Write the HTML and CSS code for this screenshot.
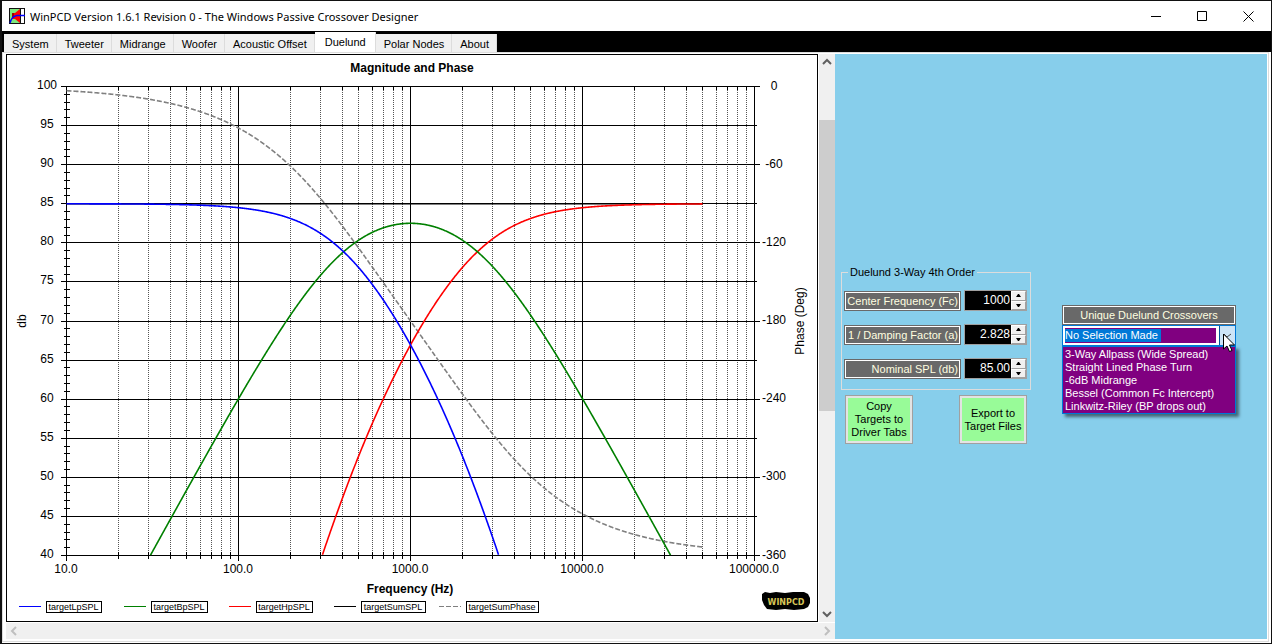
FILE: index.html
```
<!DOCTYPE html>
<html lang="en">
<head>
  <meta charset="UTF-8" />
  <title>WinPCD Version 1.6.1</title>
  <link rel="stylesheet" href="styles.css">
</head>
<body>

<div class="window">
  <header class="title-bar">
    <svg class="app-icon" width="16" height="16" viewBox="0 0 16 16">
      <rect width="16" height="16" fill="#111" />
      <rect x="1" y="1" width="10" height="14" fill="#7de87d" />
      <rect x="12" y="1" width="3" height="14" fill="#fff" />
      <path d="M3 5h3l5-4v14l-5-4H3z" fill="#f00" />
      <path d="M3 5h2v5H3z" fill="#900" />
      <path d="M1 15C2 11 4 8 8 7.500H16" fill="none" stroke="#00f" stroke-width="1.300" />
    </svg>
    <h1>WinPCD Version 1.6.1 Revision 0 - The Windows Passive Crossover Designer</h1>
    <div class="window-buttons">
      <button type="button" aria-label="Minimize"><svg width="11" height="11"><path d="M0 5.5h10" /></svg></button>
      <button type="button" aria-label="Maximize"><svg width="11" height="11"><path d="M.5.5h9v9h-9z" /></svg></button>
      <button type="button" aria-label="Close"><svg width="11" height="11"><path d="M.5.5l10 10M10.5.5l-10 10" /></svg></button>
    </div>
  </header>

  <nav class="tabs">
    <a href="#system">System</a>
    <a href="#tweeter">Tweeter</a>
    <a href="#midrange">Midrange</a>
    <a href="#woofer">Woofer</a>
    <a href="#offset">Acoustic Offset</a>
    <a href="#duelund" class="active">Duelund</a>
    <a href="#polar">Polar Nodes</a>
    <a href="#about">About</a>
  </nav>

  <main class="page">
    <section class="chart-area">
      <div class="chart">
        <svg id="chart" viewBox="7 55 810 566">
          <text class="chart-title" x="412" y="72">Magnitude and Phase</text>
          <g id="grid"></g>
          <g id="curves"></g>
          <g id="labels"></g>
          <text class="chart-title" x="410" y="593">Frequency (Hz)</text>
          <text class="axis" transform="translate(26 321) rotate(-90)">db</text>
          <text class="axis" transform="translate(804 321) rotate(-90)">Phase (Deg)</text>
          <g id="legend"></g>
          <g>
            <path d="M762 594l3-2 5 1 6-1 9 1 8-1 11 0 4 2 2 4v5l-2 4-4 2-10 1-9-1-9 1-9-1-3-4-2-5z" />
            <text class="logo" x="786" y="605">WINPCD</text>
          </g>
        </svg>
      </div>
      <div class="scroll-v">
        <button type="button" aria-label="Scroll up"><svg width="10" height="8"><path d="M1 6l4-4 4 4" /></svg></button>
        <div class="track"><div class="thumb"></div></div>
        <button type="button" aria-label="Scroll down"><svg width="10" height="8"><path d="M1 2l4 4 4-4" /></svg></button>
      </div>
      <div class="scroll-h">
        <button type="button" aria-label="Scroll left" disabled><svg width="8" height="10"><path d="M6 1L2 5l4 4" /></svg></button>
        <button type="button" aria-label="Scroll right" disabled><svg width="8" height="10"><path d="M2 1l4 4-4 4" /></svg></button>
      </div>
    </section>

    <section class="controls">
      <form class="settings">
        <fieldset>
          <legend>Duelund 3-Way 4th Order</legend>
          <div class="row">
            <label for="fc" class="tag">Center Frequency (Fc)</label>
            <div class="spinner">
              <input type="text" id="fc" value="1000">
              <div class="steps">
                <button type="button" aria-label="Increase"><svg width="5" height="3"><path d="M0 3h5L3 0H2z" /></svg></button>
                <button type="button" aria-label="Decrease"><svg width="5" height="3"><path d="M0 0h5L3 3H2z" /></svg></button>
              </div>
            </div>
          </div>
          <div class="row">
            <label for="damping" class="tag">1 / Damping Factor (a)</label>
            <div class="spinner">
              <input type="text" id="damping" value="2.828">
              <div class="steps">
                <button type="button" aria-label="Increase"><svg width="5" height="3"><path d="M0 3h5L3 0H2z" /></svg></button>
                <button type="button" aria-label="Decrease"><svg width="5" height="3"><path d="M0 0h5L3 3H2z" /></svg></button>
              </div>
            </div>
          </div>
          <div class="row">
            <label for="spl" class="tag">Nominal SPL (db)</label>
            <div class="spinner">
              <input type="text" id="spl" value="85.00">
              <div class="steps">
                <button type="button" aria-label="Increase"><svg width="5" height="3"><path d="M0 3h5L3 0H2z" /></svg></button>
                <button type="button" aria-label="Decrease"><svg width="5" height="3"><path d="M0 0h5L3 3H2z" /></svg></button>
              </div>
            </div>
          </div>
        </fieldset>
        <div class="actions">
          <button type="button">Copy Targets to Driver Tabs</button>
          <button type="button">Export to Target Files</button>
        </div>
      </form>

      <div class="presets">
        <label for="preset" class="tag">Unique Duelund Crossovers</label>
        <div class="combo">
          <input type="text" id="preset" value="No Selection Made ">
          <button type="button" aria-label="Open list"><svg width="9" height="6"><path d="M1 1l3 3 4-3" /></svg></button>
          <select size="5" aria-label="Unique Duelund Crossovers">
            <option>3-Way Allpass (Wide Spread)</option>
            <option>Straight Lined Phase Turn</option>
            <option>-6dB Midrange</option>
            <option>Bessel (Common Fc Intercept)</option>
            <option>Linkwitz-Riley (BP drops out)</option>
          </select>
          <svg class="pointer" width="12" height="19" viewBox="0 0 12 19">
            <path d="M.5 1v15l3.500-3 2.500 5.500 2.500-1L6.500 12h5z" fill="#fff" stroke="#000" />
          </svg>
        </div>
      </div>
    </section>
  </main>
</div>

<script src="script.js"></script>
</body>
</html>
```
FILE: styles.css
```
* {
  box-sizing: border-box;
}

body {
  margin: 0;
  font-family: "Liberation Sans", Arial, sans-serif;
  font-size: 11px;
  line-height: 13px;
  background-color: #fff;
  color: #000;
}

button,
input,
select {
  font: inherit;
  margin: 0;
  padding: 0;
}

.window {
  display: flex;
  flex-direction: column;
  min-height: 100vh;
  border: 1px solid #111;
  border-left-width: 2px;
}

/* Title bar */
.title-bar {
  display: flex;
  align-items: center;
  height: 30px;
  padding-left: 7px;
}

.title-bar h1 {
  flex: 1;
  margin: 0;
  padding-left: 5px;
  font-family: "Noto Sans", sans-serif;
  font-size: 11px;
  font-weight: normal;
}

.window-buttons {
  display: flex;
}

.window-buttons button {
  width: 46px;
  height: 30px;
  border: none;
  background: none;
}

.window-buttons svg {
  display: block;
  margin: auto;
  fill: none;
  stroke: #000;
}

/* Tabs */
.tabs {
  display: flex;
  align-items: flex-end;
  height: 21px;
  padding-left: 2px;
  background-color: #000;
}

.tabs a {
  height: 18px;
  padding: 4px 7px 0 8px;
  border-right: 1px solid #dcdcdc;
  background-color: #f0f0f0;
  color: #000;
  text-decoration: none;
}

.tabs a.active {
  height: 20px;
  padding: 4px 9px 0 10px;
  background-color: #fff;
}

.page {
  flex: 1;
  display: grid;
  grid-template-columns: 829fr 432fr;
  margin: 0 2px 1px 0;
  padding: 1px 1px 2px 3px;
  border: 1px solid #dcdcdc;
}

/* Chart */
.chart-area {
  display: grid;
  grid-template-columns: 1fr 16px;
  grid-template-rows: auto 16px;
  align-content: start;
  gap: 1px;
}

.chart {
  border: 1px solid #000;
}

.chart svg {
  display: block;
  width: 100%;
}

.chart text {
  font-size: 12px;
  text-anchor: middle;
}

.chart .chart-title {
  font-weight: bold;
}

.chart .legend-label {
  font-size: 9px;
}

.chart .logo {
  font-family: "DejaVu Sans", sans-serif;
  font-size: 8px;
  font-weight: bold;
  fill: #d6c557;
}

.line {
  stroke: #000;
}

.dotted {
  stroke: #555;
  stroke-dasharray: 1 1;
}

.curve {
  fill: none;
  stroke-width: 1.6;
}

.curve.dashed {
  stroke-dasharray: 5 2;
}

.scroll-v,
.scroll-h {
  display: flex;
  justify-content: space-between;
  background-color: #f0f0f0;
}

.scroll-v {
  flex-direction: column;
}

.scroll-h {
  grid-column: 1 / 3;
}

.scroll-v button,
.scroll-h button {
  width: 16px;
  height: 16px;
  border: none;
  background: none;
}

.scroll-v svg,
.scroll-h svg {
  display: block;
  margin: auto;
  fill: none;
  stroke: #606060;
  stroke-width: 2;
}

.scroll-h svg {
  stroke: #bfbfbf;
}

.track {
  flex: 1;
  padding-top: 50px;
}

.thumb {
  height: 291px;
  background-color: #cdcdcd;
}

/* Controls */
.controls {
  display: flex;
  align-items: flex-start;
  gap: 31px;
  padding: 212px 0 0 6px;
  background-color: #87ceeb;
}

.settings {
  width: 190px;
}

fieldset {
  display: flex;
  flex-direction: column;
  gap: 13px;
  min-width: 0;
  margin: 0;
  padding: 11px 3px 10px 2px;
  border: 1px solid #dcdcdc;
}

legend {
  margin-left: 4px;
  padding: 0 2px;
}

.row {
  display: flex;
  justify-content: space-between;
  align-items: center;
}

.tag {
  display: block;
  border: 1px solid #696969;
  outline: 1px solid #fff;
  outline-offset: -2px;
  background-color: #696969;
  color: #ffffe0;
}

.row .tag {
  width: 117px;
  height: 20px;
  padding: 3px 2px;
  text-align: right;
  white-space: nowrap;
}

.spinner {
  display: flex;
  width: 63px;
  height: 21px;
  border: 1px solid #a0a0a0;
  background-color: #000;
}

.spinner input {
  flex: 1;
  min-width: 0;
  padding-right: 1px;
  border: none;
  background-color: #000;
  color: #fff;
  font-size: 12px;
  text-align: right;
}

.steps {
  display: flex;
  flex-direction: column;
  width: 15px;
  background-color: #f0f0f0;
}

.steps button {
  flex: 1;
  border: 1px solid #a0a0a0;
  border-top-color: #fff;
  border-left-color: #fff;
  background-color: #f0f0f0;
}

.steps svg {
  display: block;
  margin: auto;
}

.actions {
  display: flex;
  justify-content: space-between;
  padding: 5px 4px 0;
}

.actions button {
  width: 68px;
  height: 49px;
  padding: 0 4px;
  border: 1px solid #a0a0a0;
  outline: 2px solid #e3e3e3;
  outline-offset: -3px;
  background-color: #98fb98;
  line-height: 13px;
  color: #000;
}

.presets {
  width: 174px;
  padding-top: 39px;
}

.presets .tag {
  height: 20px;
  padding-top: 3px;
  text-align: center;
}

.combo {
  position: relative;
  display: flex;
  height: 21px;
  border: 1px solid #0078d7;
  background-color: #fff;
}

.combo input {
  flex: 1;
  min-width: 0;
  margin: 2px 3px 2px 2px;
  border: none;
  outline: none;
  background-color: #800080;
  color: #fff;
  caret-color: #ff8728;
}

.combo input::selection {
  background-color: #0078d7;
  color: #fff;
}

.combo button {
  width: 16px;
  border: none;
  border-left: 1px solid #005499;
  background-color: #cce4f7;
}

.combo button svg {
  display: block;
  margin: auto;
  fill: none;
  stroke: #444;
}

.combo select {
  position: absolute;
  top: 20px;
  left: -1px;
  width: 174px;
  height: 68px;
  padding-top: 1px;
  border: 1px solid #0078d7;
  border-radius: 0;
  outline: none;
  background-color: #800080;
  color: #fff;
  box-shadow: 3px 3px 3px rgba(0, 0, 0, 0.5);
  overflow: hidden;
}

.combo option {
  min-height: 13px;
  padding: 0 2px;
  line-height: 13px;
}

.pointer {
  position: absolute;
  top: 7px;
  right: 0;
}
```
FILE: script.js
```
const svg = {
  grid: document.getElementById("grid"),
  curves: document.getElementById("curves"),
  labels: document.getElementById("labels"),
  legend: document.getElementById("legend")
};

const left = 66, top_ = 86, bottom = 555;
const fc = 1000, a = 2.828, spl = 85;

function add(parent, tag, attrs, text) {
  const el = document.createElementNS("http://www.w3.org/2000/svg", tag);
  for (const key in attrs) el.setAttribute(key, attrs[key]);
  if (text !== undefined) el.textContent = text;
  parent.appendChild(el);
}

// Lines are centred on a pixel so they stay sharp
function line(x1, y1, x2, y2, cls) {
  const vertical = x1 === x2;
  add(svg.grid, "path", {
    class: cls || "line",
    d: vertical ? `M${x1 + 0.5} ${y1}V${y2}` : `M${x1} ${y1 + 0.5}H${x2}`
  });
}

const xOf = f => left + 0.5 + 172 * Math.log10(f / 10);
const yOf = db => top_ + 0.5 + (100 - db) * (bottom - top_) / 60;
const yPhase = deg => top_ + 0.5 - deg * (bottom - top_) / 360;

// Frequency axis
for (let d = 0; d <= 4; d++) {
  const x = left + d * 172;
  line(x, top_, x, bottom + 6);
  add(svg.labels, "text", { x: x, y: 573 }, Math.pow(10, d + 1).toFixed(1));
  for (let n = 2; n < 10 && d < 4; n++) {
    const xm = Math.round(xOf(n * Math.pow(10, d + 1)) - 0.5);
    line(xm, top_, xm, bottom, "dotted");
    line(xm, top_, xm, top_ + 4);
    line(xm, bottom - 3, xm, bottom + 4);
  }
}

// SPL axis on the left
for (let db = 40; db <= 100; db++) {
  const y = Math.round(yOf(db) - 0.5);
  if (db % 5) {
    line(64, y, 70, y);
  } else {
    line(61, y, db % 10 ? 757 : 760, y);
    add(svg.labels, "text", { x: 47, y: y + 3 }, db);
  }
}

// Phase axis on the right
for (let deg = 0; deg >= -360; deg -= 60) {
  add(svg.labels, "text", { x: 774, y: Math.round(yPhase(deg)) + 3 }, deg);
}

// 4th order Duelund targets
const denom = w => (1 - w * w) ** 2 + (a * w) ** 2;
const level = gain => yOf(spl + 20 * Math.log10(gain));
const targets = [
  { name: "targetSumPhase", box: 72, color: "gray", dashed: true, y: w => yPhase(-2 * Math.atan2(a * w, 1 - w * w) * 180 / Math.PI) },
  { name: "targetSumSPL", box: 64, color: "black", y: w => level(1) },
  { name: "targetHpSPL", box: 56, color: "red", y: w => level(w ** 4 / denom(w)) },
  { name: "targetBpSPL", box: 56, color: "green", y: w => level((a * a - 2) * w * w / denom(w)) },
  { name: "targetLpSPL", box: 55, color: "blue", y: w => level(1 / denom(w)) }
];

targets.forEach(t => {
  const points = [];
  for (let x = left; x <= 702; x += 0.5) {
    const w = 10 * Math.pow(10, (x - left) / 172) / fc;
    const y = t.y(w);
    if (y <= bottom + 1) points.push((x + 0.5) + "," + y.toFixed(2));
  }
  add(svg.curves, "polyline", {
    class: t.dashed ? "curve dashed" : "curve",
    stroke: t.color,
    points: points.join(" ")
  });
});

// Legend
["targetLpSPL", "targetBpSPL", "targetHpSPL", "targetSumSPL", "targetSumPhase"].forEach((name, i) => {
  const t = targets.find(item => item.name === name);
  const x = 19 + i * 105;
  add(svg.legend, "path", {
    stroke: t.color,
    "stroke-dasharray": t.dashed ? "5 2" : "none",
    d: `M${x} 606.5h22`
  });
  add(svg.legend, "rect", { x: x + 27.5, y: 601.5, width: t.box, height: 11, fill: "none", stroke: "black" });
  add(svg.legend, "text", { class: "legend-label", x: x + 27 + t.box / 2, y: 610 }, name);
});

// Preset box opens with its text selected
const preset = document.getElementById("preset");
preset.focus();
preset.select();
```
